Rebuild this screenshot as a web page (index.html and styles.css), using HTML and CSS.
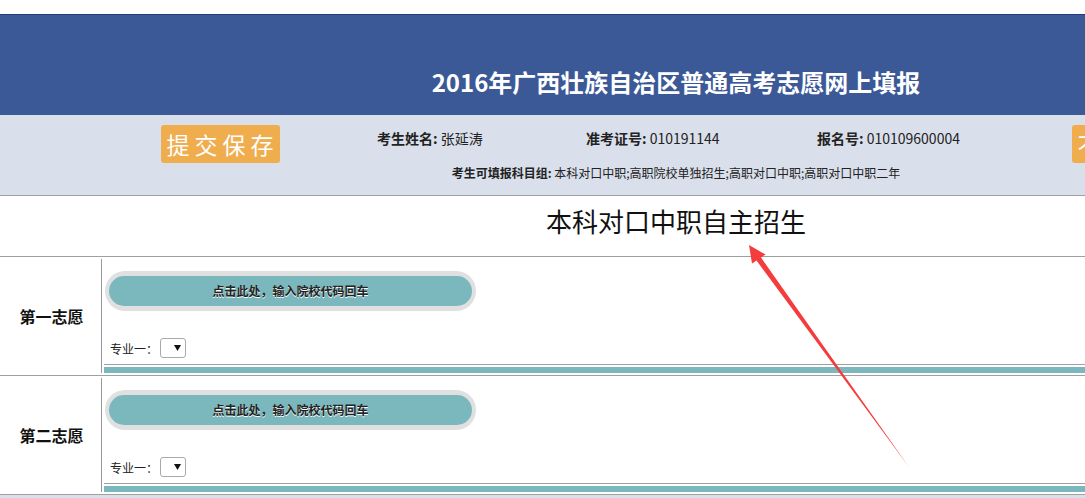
FILE: index.html
```html
<!DOCTYPE html>
<html lang="zh-CN">
<head>
<meta charset="utf-8">
<title>2016年广西壮族自治区普通高考志愿网上填报</title>
<link rel="stylesheet" href="styles.css">
</head>
<body>
<div class="page">
  <header class="hd">
    <h1 class="hd-title">2016年广西壮族自治区普通高考志愿网上填报</h1>
  </header>
  <section class="info">
    <div class="info-row">
      <div class="cell"></div>
      <div class="cell cell-btn"><button class="obtn">提交保存</button></div>
      <div class="cell"><b>考生姓名:</b> 张延涛</div>
      <div class="cell"><b>准考证号:</b> 010191144</div>
      <div class="cell"><b>报名号:</b> 010109600004</div>
      <div class="cell cell-btn"><button class="obtn">不再填报</button></div>
    </div>
    <div class="info-sub"><b>考生可填报科目组:</b> 本科对口中职;高职院校单独招生;高职对口中职;高职对口中职二年</div>
  </section>
  <div class="subject">本科对口中职自主招生</div>

  <div class="row">
    <div class="row-label">第一志愿</div>
    <div class="row-body">
      <div class="pill"><div class="pill-in">点击此处，输入院校代码回车</div></div>
      <div class="major">专业一：<span class="sel"><svg class="sel-arrow" width="7" height="6" viewBox="0 0 7 6"><polygon points="0,0 7,0 3.5,6" fill="#111"/></svg></span></div>
      <div class="hr"></div>
      <div class="teal"></div>
    </div>
  </div>

  <div class="row">
    <div class="row-label">第二志愿</div>
    <div class="row-body">
      <div class="pill"><div class="pill-in">点击此处，输入院校代码回车</div></div>
      <div class="major">专业一：<span class="sel"><svg class="sel-arrow" width="7" height="6" viewBox="0 0 7 6"><polygon points="0,0 7,0 3.5,6" fill="#111"/></svg></span></div>
      <div class="hr"></div>
      <div class="teal"></div>
    </div>
  </div>
  <div class="foot"></div>

  <svg class="arrow" width="1352" height="498" viewBox="0 0 1352 498">
    <polygon points="749,245 765.5,254.5 761,257.5 909,467 756.5,260.5 752,263.5" fill="#f43c3c"/>
  </svg>
</div>
</body>
</html>
```

FILE: styles.css
```css
html, body {
  margin: 0;
  padding: 0;
  overflow: hidden;
  background: #fff;
}
body {
  font-family: "Noto Sans CJK SC", "Noto Sans", sans-serif;
  color: #222;
}
.page {
  width: 1352px;
  position: relative;
  padding-top: 14px;
}
.hd {
  background: #3b5897;
  border-top: 1px solid #1f3d7a;
  height: 100px;
}
.hd-title {
  margin: 0;
  padding-top: 52px;
  text-align: center;
  color: #fff;
  font-size: 24px;
  line-height: 30px;
  font-weight: bold;
}
.info {
  background: #d9dfeb;
  height: 70px;
  padding-top: 10px;
  border-bottom: 1px solid #a0a0a0;
}
.info-row {
  display: grid;
  grid-template-columns: 161px 216px 209px 231px 255px 119px;
  height: 38px;
  font-size: 14px;
}
.cell {
  padding-top: 5px;
  line-height: 16px;
  white-space: nowrap;
}
.cell-btn {
  padding-top: 0;
}
.obtn {
  width: 119px;
  height: 38px;
  padding: 0 0 0 4px;
  border: none;
  border-radius: 3px;
  background: #f0ad4e;
  color: #fff;
  font-family: "Noto Sans CJK SC", sans-serif;
  font-size: 23px;
  letter-spacing: 5px;
  line-height: 38px;
}
.info-sub {
  margin-top: 2px;
  text-align: center;
  font-size: 12px;
  line-height: 16px;
}
.subject {
  height: 50px;
  padding-top: 10px;
  border-bottom: 1px solid #a0a0a0;
  text-align: center;
  font-size: 26px;
  line-height: 30px;
  color: #111;
}
.row {
  display: flex;
  height: 118px;
  border-bottom: 1px solid #a0a0a0;
}
.row-label {
  width: 99px;
  flex: none;
  margin: 2px 0;
  padding-left: 2px;
  border-right: 1px solid #999;
  display: flex;
  align-items: center;
  justify-content: center;
  font-size: 16px;
  font-weight: bold;
  color: #111;
}
.row-body {
  flex: 1;
  padding-left: 2px;
  display: flex;
  flex-direction: column;
}
.pill {
  margin: 14px 0 0 1px;
  width: 371px;
  height: 40px;
  box-sizing: border-box;
  padding: 5px 4px;
  background: #e0e0e0;
  border-radius: 20px;
}
.pill-in {
  height: 30px;
  background: #7ab8bd;
  border-radius: 15px;
  text-align: center;
  font-size: 12px;
  font-weight: bold;
  line-height: 30px;
  color: #222;
  text-shadow: 0 1px 0 #fff;
}
.major {
  margin-top: 27px;
  height: 20px;
  display: flex;
  align-items: center;
  padding-left: 6px;
  font-size: 12px;
}
.sel {
  width: 26px;
  height: 20px;
  box-sizing: border-box;
  margin-left: 2px;
  border: 1px solid #a9a9a9;
  border-radius: 3px;
  background: #fff;
  display: flex;
  align-items: center;
  justify-content: flex-end;
  padding-right: 4px;
}
.sel-arrow {
  display: block;
}
.hr {
  margin-top: 6px;
  height: 1px;
  background: #a0a0a0;
}
.teal {
  margin-top: 2px;
  height: 6px;
  background: #7ab8bd;
}
.foot {
  background: #d9dfeb;
  height: 20px;
}
.arrow {
  position: absolute;
  left: 0;
  top: 0;
  pointer-events: none;
}
```
